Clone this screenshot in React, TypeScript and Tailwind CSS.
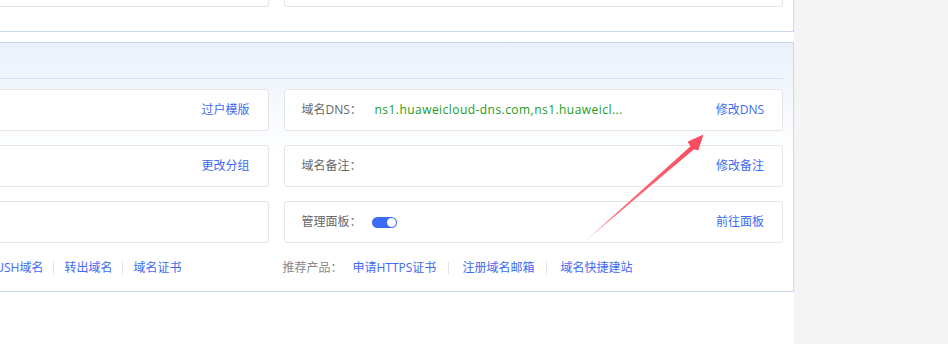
import React from "react";

const font = { fontFamily: '"Open Sans", "Noto Sans CJK SC", sans-serif' };

function LinkText({ children }: { children: React.ReactNode }) {
  return <span className="text-[#3f69f2] cursor-pointer">{children}</span>;
}

export default function App() {
  return (
    <div
      className="relative flex h-[344px] w-[948px] overflow-hidden bg-white text-[12px]"
      style={font}
    >
      {/* page content, cropped on the left */}
      <div className="w-[794px] shrink-0 overflow-hidden">
        <div className="-ml-[242px] w-[1036px]">
          {/* previous panel (bottom edge) */}
          <div className="h-[32px] border-x border-b border-[#c9d8ee] px-[10px]">
            <div className="grid grid-cols-2 gap-x-[15px]">
              <div className="h-[7px] rounded-b-[3px] border-x border-b border-[#e3e5e9] bg-white" />
              <div className="h-[7px] rounded-b-[3px] border-x border-b border-[#e3e5e9] bg-white" />
            </div>
          </div>

          {/* domain panel */}
          <div className="mt-[10px] border border-[#c9d8ee] bg-linear-to-b from-[#eaf1fb] to-white to-45% px-[10px] pb-[14px]">
            <div className="h-[36px] border-b border-[#d6e0ee]" />

            <div className="mt-[10px] grid grid-cols-2 gap-x-[15px] gap-y-[14px]">
              {/* row 1 */}
              <div className="flex h-[42px] items-center justify-end rounded-[3px] border border-[#e3e5e9] bg-white px-[18px]">
                <LinkText>过户模版</LinkText>
              </div>
              <div className="flex h-[42px] items-center rounded-[3px] border border-[#e3e5e9] bg-white pl-[17px] pr-[18px]">
                <span className="w-[73px] shrink-0 text-[#666]">域名DNS：</span>
                <span className="whitespace-nowrap tracking-[0.45px] text-[#1c9d1c]">
                  ns1.huaweicloud-dns.com,ns1.huaweicl...
                </span>
                <span className="ml-auto">
                  <LinkText>修改DNS</LinkText>
                </span>
              </div>

              {/* row 2 */}
              <div className="flex h-[42px] items-center justify-end rounded-[3px] border border-[#e3e5e9] bg-white px-[18px]">
                <LinkText>更改分组</LinkText>
              </div>
              <div className="flex h-[42px] items-center rounded-[3px] border border-[#e3e5e9] bg-white pl-[17px] pr-[18px]">
                <span className="w-[73px] shrink-0 text-[#666]">域名备注：</span>
                <span className="ml-auto">
                  <LinkText>修改备注</LinkText>
                </span>
              </div>

              {/* row 3 */}
              <div className="h-[42px] rounded-[3px] border border-[#e3e5e9] bg-white" />
              <div className="flex h-[42px] items-center rounded-[3px] border border-[#e3e5e9] bg-white pl-[17px] pr-[18px]">
                <span className="w-[70px] shrink-0 text-[#666]">管理面板：</span>
                <span className="flex h-[11px] w-[25px] items-center justify-end rounded-full bg-[#3a6cf6] pr-[1px]">
                  <span className="h-[9px] w-[9px] rounded-full bg-white" />
                </span>
                <span className="ml-auto">
                  <LinkText>前往面板</LinkText>
                </span>
              </div>
            </div>

            {/* link rows */}
            <div className="mt-[16px] grid h-[18px] grid-cols-2 gap-x-[15px] leading-[18px]">
              <div className="flex items-center justify-end pr-[87px]">
                <LinkText>PUSH域名</LinkText>
                <span className="mx-[10px] inline-block h-[12px] w-px bg-[#e3e5ea]" />
                <LinkText>转出域名</LinkText>
                <span className="mx-[10px] inline-block h-[12px] w-px bg-[#e3e5ea]" />
                <LinkText>域名证书</LinkText>
              </div>
              <div className="flex items-center">
                <span className="w-[70px] -ml-px text-[#888]">推荐产品：</span>
                <LinkText>申请HTTPS证书</LinkText>
                <span className="ml-[12px] mr-[13px] inline-block h-[12px] w-px bg-[#e3e5ea]" />
                <LinkText>注册域名邮箱</LinkText>
                <span className="ml-[12px] mr-[13px] inline-block h-[12px] w-px bg-[#e3e5ea]" />
                <LinkText>域名快捷建站</LinkText>
              </div>
            </div>
          </div>
        </div>
      </div>

      {/* grey page margin */}
      <div className="flex-1 bg-[#f4f4f4]" />

      {/* annotation arrow */}
      <svg
        className="pointer-events-none absolute left-0 top-0"
        width="948"
        height="344"
        viewBox="0 0 948 344"
      >
        <defs>
          <linearGradient id="arrowFill" x1="583" y1="243" x2="703" y2="135" gradientUnits="userSpaceOnUse">
            <stop offset="0" stopColor="#ffc2c8" />
            <stop offset="0.25" stopColor="#fb6f7c" />
            <stop offset="1" stopColor="#f84a5c" />
          </linearGradient>
        </defs>
        <polygon
          points="583,243 690.5,146.3 687.5,141.8 703.5,134.5 698.3,150.2 693.7,149.6"
          fill="url(#arrowFill)"
        />
      </svg>
    </div>
  );
}
